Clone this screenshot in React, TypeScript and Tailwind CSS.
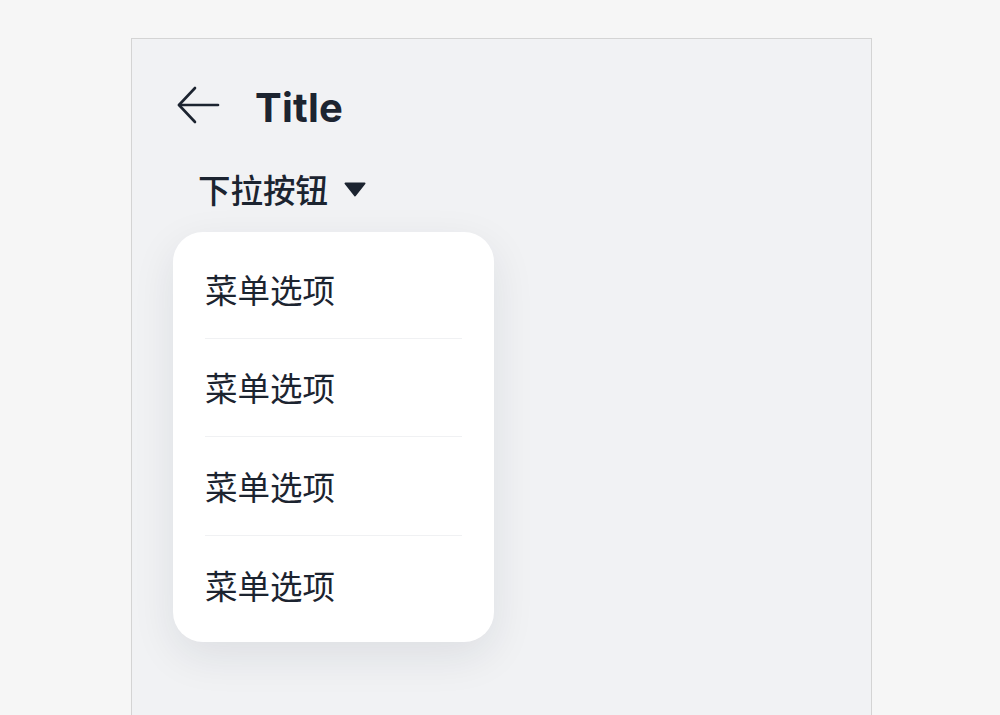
const items = ['菜单选项', '菜单选项', '菜单选项', '菜单选项'];

function BackArrow() {
  return (
    <svg width="44" height="38" viewBox="0 0 44 38" fill="none" stroke="#1c2430" strokeWidth="2.6" strokeLinecap="round" strokeLinejoin="round">
      <path d="M42 19H3" />
      <path d="M19 2L3 19l16 17" />
    </svg>
  );
}

function Caret() {
  return (
    <svg width="22" height="15" viewBox="0 0 22 15">
      <path d="M1.5 1.5h19L11 13.5z" fill="#1c2430" stroke="#1c2430" strokeWidth="2" strokeLinejoin="round" />
    </svg>
  );
}

export default function App() {
  return (
    <div
      className="min-h-[715px] h-[715px] overflow-hidden bg-[#f6f6f6] pt-[38px] pl-[131px]"
      style={{ fontFamily: '"Noto Sans", "Noto Sans CJK SC", sans-serif' }}
    >
      <div className="w-[741px] h-[677px] border-l border-t border-r border-[#d4d4d4] bg-[#f1f2f4] text-[#1c2430]">
        <div className="flex items-center h-[60px] mt-[36px] pl-[44px]">
          <BackArrow />
          <span className="ml-[35px] pt-[6px] text-[40px] font-bold tracking-[0.2px]" style={{ fontFamily: 'Inter, "Noto Sans", sans-serif' }}>
            Title
          </span>
        </div>
        <button className="flex items-center gap-[16px] mt-[29px] ml-[66px] h-[50px]">
          <span className="text-[32.5px] leading-none font-medium" style={{ fontFamily: '"Noto Sans CJK SC", sans-serif' }}>下拉按钮</span>
          <Caret />
        </button>
        <div className="mt-[18px] ml-[41px] w-[321px] rounded-[30px] bg-white py-[8px] shadow-[0_14px_44px_rgba(20,30,50,0.09)]">
          {items.map((label, i) => (
            <div key={i} className="px-[32px]">
              <div
                className={`h-[98.5px] flex items-center ${i < items.length - 1 ? 'border-b border-[#f0f1f3]' : ''}`}
              >
                <span className="text-[32.5px] leading-none" style={{ fontFamily: '"Noto Sans CJK SC", sans-serif' }}>
                  {label}
                </span>
              </div>
            </div>
          ))}
        </div>
      </div>
    </div>
  );
}
